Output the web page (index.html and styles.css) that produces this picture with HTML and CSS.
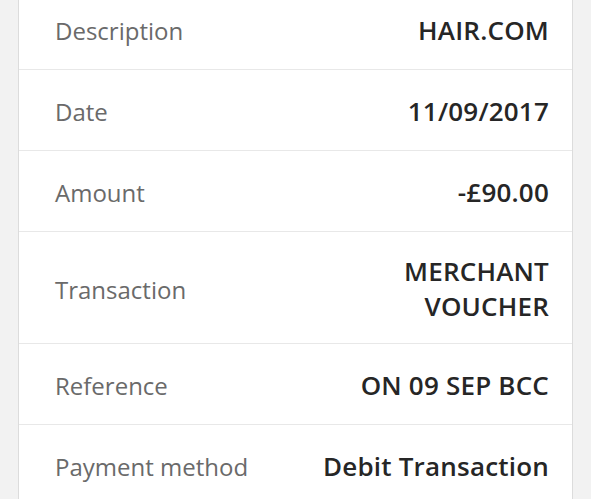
FILE: index.html
```html
<!DOCTYPE html>
<html lang="en">
<head>
<meta charset="utf-8">
<title>Transaction details</title>
<link rel="stylesheet" href="styles.css">
</head>
<body>
<div class="page">
  <div class="card">
    <div class="row"><span class="label">Description</span><span class="value">HAIR.COM</span></div>
    <div class="row"><span class="label">Date</span><span class="value">11/09/2017</span></div>
    <div class="row"><span class="label">Amount</span><span class="value">-£90.00</span></div>
    <div class="row tall"><span class="label">Transaction</span><span class="value">MERCHANT<br>VOUCHER</span></div>
    <div class="row"><span class="label">Reference</span><span class="value">ON 09 SEP BCC</span></div>
    <div class="row"><span class="label">Payment method</span><span class="value">Debit Transaction</span></div>
  </div>
</div>
</body>
</html>
```

FILE: styles.css
```css
html, body {
  margin: 0;
  padding: 0;
  background: #f2f2f2;
  overflow: hidden;
}
.page {
  padding: 0 18px 0 18px;
  height: 499px;
  overflow: hidden;
}
.card {
  background: #ffffff;
  border-left: 1px solid #dcdcdc;
  border-right: 1px solid #dcdcdc;
  margin-top: -11px;
  font-family: "Open Sans", "Liberation Sans", sans-serif;
}
.row {
  box-sizing: border-box;
  display: flex;
  justify-content: space-between;
  align-items: center;
  min-height: 81px;
  padding: 3px 23px 0 36px;
  border-bottom: 1px solid #e8e8e8;
}
.row.tall {
  min-height: 112px;
}
.label {
  font-size: 24px;
  color: #6a6a6a;
}
.value {
  font-size: 26px;
  font-weight: 600;
  color: #262626;
  text-align: right;
  line-height: 35px;
  letter-spacing: 0.2px;
}
```
